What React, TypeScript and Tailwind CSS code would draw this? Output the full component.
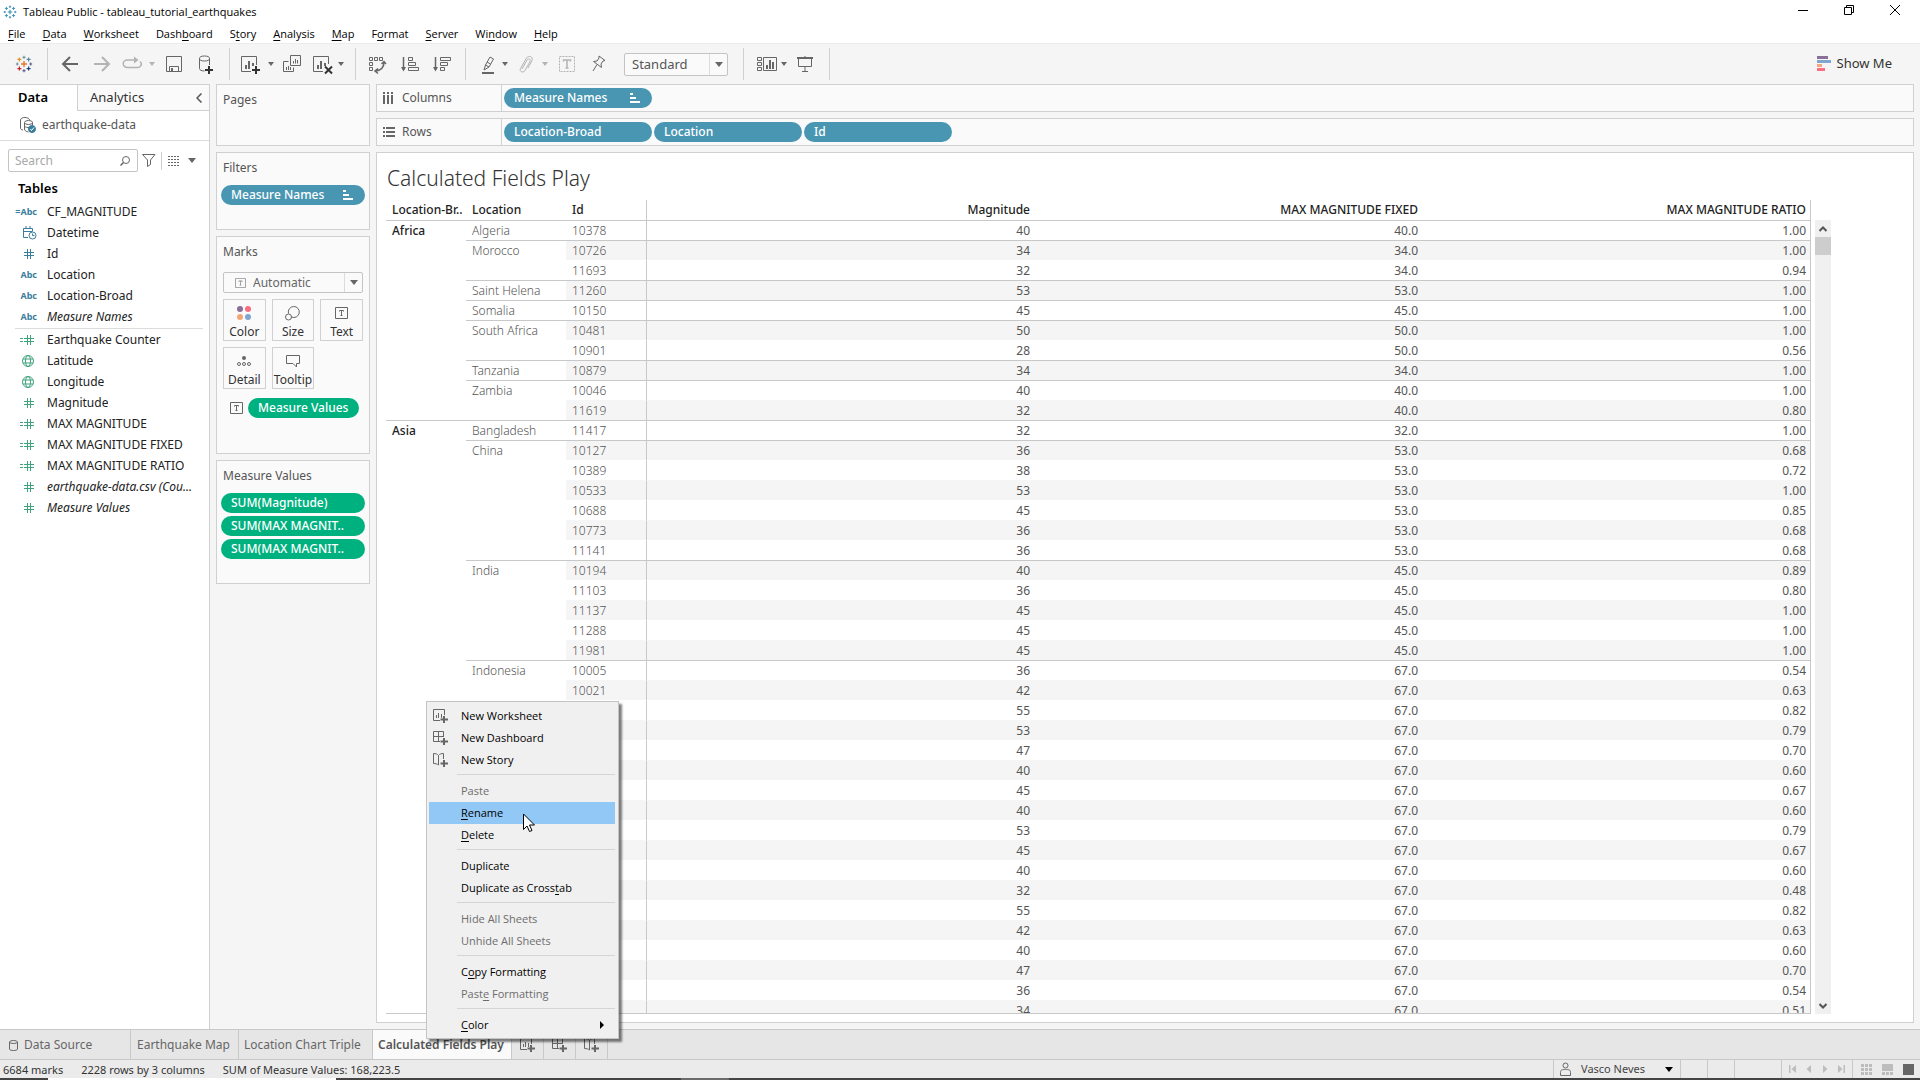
import { useState } from 'react';
import type { ReactNode } from 'react';
import clsx from 'clsx';

// "_" marks the mnemonic letter
const menus = [
  '_File', '_Data', '_Worksheet', 'Dash_board', 'S_tory', '_Analysis',
  '_Map', 'F_ormat', '_Server', 'Wi_ndow', '_Help',
];

type FieldIcon = 'calcAbc' | 'date' | 'num' | 'abc' | 'calcNum' | 'geo';
type Field = { name: string; icon: FieldIcon; italic?: boolean };

const dimensions: Field[] = [
  { name: 'CF_MAGNITUDE', icon: 'calcAbc' },
  { name: 'Datetime', icon: 'date' },
  { name: 'Id', icon: 'num' },
  { name: 'Location', icon: 'abc' },
  { name: 'Location-Broad', icon: 'abc' },
  { name: 'Measure Names', icon: 'abc', italic: true },
];

const measures: Field[] = [
  { name: 'Earthquake Counter', icon: 'calcNum' },
  { name: 'Latitude', icon: 'geo' },
  { name: 'Longitude', icon: 'geo' },
  { name: 'Magnitude', icon: 'num' },
  { name: 'MAX MAGNITUDE', icon: 'calcNum' },
  { name: 'MAX MAGNITUDE FIXED', icon: 'calcNum' },
  { name: 'MAX MAGNITUDE RATIO', icon: 'calcNum' },
  { name: 'earthquake-data.csv (Cou...', icon: 'num', italic: true },
  { name: 'Measure Values', icon: 'num', italic: true },
];

// region, location, id, magnitude, fixed, ratio
const rows: [string, string, string, string, string, string][] = [
  ['Africa', 'Algeria', '10378', '40', '40.0', '1.00'],
  ['', 'Morocco', '10726', '34', '34.0', '1.00'],
  ['', '', '11693', '32', '34.0', '0.94'],
  ['', 'Saint Helena', '11260', '53', '53.0', '1.00'],
  ['', 'Somalia', '10150', '45', '45.0', '1.00'],
  ['', 'South Africa', '10481', '50', '50.0', '1.00'],
  ['', '', '10901', '28', '50.0', '0.56'],
  ['', 'Tanzania', '10879', '34', '34.0', '1.00'],
  ['', 'Zambia', '10046', '40', '40.0', '1.00'],
  ['', '', '11619', '32', '40.0', '0.80'],
  ['Asia', 'Bangladesh', '11417', '32', '32.0', '1.00'],
  ['', 'China', '10127', '36', '53.0', '0.68'],
  ['', '', '10389', '38', '53.0', '0.72'],
  ['', '', '10533', '53', '53.0', '1.00'],
  ['', '', '10688', '45', '53.0', '0.85'],
  ['', '', '10773', '36', '53.0', '0.68'],
  ['', '', '11141', '36', '53.0', '0.68'],
  ['', 'India', '10194', '40', '45.0', '0.89'],
  ['', '', '11103', '36', '45.0', '0.80'],
  ['', '', '11137', '45', '45.0', '1.00'],
  ['', '', '11288', '45', '45.0', '1.00'],
  ['', '', '11981', '45', '45.0', '1.00'],
  ['', 'Indonesia', '10005', '36', '67.0', '0.54'],
  ['', '', '10021', '42', '67.0', '0.63'],
  ['', '', '', '55', '67.0', '0.82'],
  ['', '', '', '53', '67.0', '0.79'],
  ['', '', '', '47', '67.0', '0.70'],
  ['', '', '', '40', '67.0', '0.60'],
  ['', '', '', '45', '67.0', '0.67'],
  ['', '', '', '40', '67.0', '0.60'],
  ['', '', '', '53', '67.0', '0.79'],
  ['', '', '', '45', '67.0', '0.67'],
  ['', '', '', '40', '67.0', '0.60'],
  ['', '', '', '32', '67.0', '0.48'],
  ['', '', '', '55', '67.0', '0.82'],
  ['', '', '', '42', '67.0', '0.63'],
  ['', '', '', '40', '67.0', '0.60'],
  ['', '', '', '47', '67.0', '0.70'],
  ['', '', '', '36', '67.0', '0.54'],
  ['', '', '', '34', '67.0', '0.51'],
];

type MenuItem = { label: string; icon?: ReactNode; disabled?: boolean; submenu?: boolean };

const contextMenu: MenuItem[][] = [
  [
    { label: 'New Worksheet', icon: <NewSheetIcon /> },
    { label: 'New Dashboard', icon: <NewDashboardIcon /> },
    { label: 'New Story', icon: <NewStoryIcon /> },
  ],
  [
    { label: 'Paste', disabled: true },
    { label: '_Rename' },
    { label: '_Delete' },
  ],
  [{ label: 'Duplicate' }, { label: 'Duplicate as Cross_tab' }],
  [
    { label: 'Hide All Sheets', disabled: true },
    { label: 'Unhide All Sheets', disabled: true },
  ],
  [{ label: 'C_opy Formatting' }, { label: 'Past_e Formatting', disabled: true }],
  [{ label: '_Color', submenu: true }],
];

function Mnemonic({ text }: { text: string }) {
  const i = text.indexOf('_');
  if (i < 0) return <>{text}</>;
  return <>{text.slice(0, i)}<u className="underline-offset-2">{text[i + 1]}</u>{text.slice(i + 2)}</>;
}

/* ---------- Icons ---------- */

function TableauMark({ className, mono }: { className: string; mono?: boolean }) {
  const c = mono
    ? ['#3d8fb5', '#3d8fb5', '#3d8fb5', '#3d8fb5', '#3d8fb5', '#3d8fb5', '#3d8fb5', '#3d8fb5', '#3d8fb5']
    : ['#e8762d', '#7099a5', '#7099a5', '#5b6591', '#5b6591', '#eb912b', '#59879b', '#c72035', '#1f447e'];
  return (
    <svg viewBox="0 0 18 18" className={className} fill="none" strokeWidth="1.2" aria-hidden="true">
      <path stroke={c[0]} strokeWidth="1.4" d="M9 6v6M6 9h6" />
      <path stroke={c[1]} d="M9 .8v3M7.5 2.3h3" />
      <path stroke={c[3]} d="M9 14.2v3M7.5 15.7h3" />
      <path stroke={c[2]} d="M.8 9h3M2.3 7.5v3" />
      <path stroke={c[4]} d="M14.2 9h3M15.7 7.5v3" />
      <path stroke={c[5]} d="M4.4 2.4v4M2.4 4.4h4" />
      <path stroke={c[6]} d="M13.6 2.4v4M11.6 4.4h4" />
      <path stroke={c[7]} d="M4.4 11.6v4M2.4 13.6h4" />
      <path stroke={c[8]} d="M13.6 11.6v4M11.6 13.6h4" />
    </svg>
  );
}

function Caret({ className = 'text-[#666]' }: { className?: string }) {
  return <svg viewBox="0 0 6 4" className={clsx('w-1.5 h-1', className)} fill="currentColor" aria-hidden="true"><path d="M0 0h6L3 4z" /></svg>;
}

function BigCaret({ className = 'text-[#666]' }: { className?: string }) {
  return <svg viewBox="0 0 8 5" className={clsx('w-2 h-[5px]', className)} fill="currentColor" aria-hidden="true"><path d="M0 0h8L4 5z" /></svg>;
}

function Glyph({ children, className = 'size-6' }: { children: ReactNode; className?: string }) {
  return <svg viewBox="0 0 24 24" className={clsx('shrink-0', className)} fill="none" stroke="#666" aria-hidden="true">{children}</svg>;
}

function NewSheetIcon() {
  return (
    <svg viewBox="0 0 16 16" className="size-4 shrink-0" fill="none" stroke="#666" aria-hidden="true">
      <path d="M11.5 7V1.5h-11v11H7" />
      <path d="M3.5 7v3M5.5 5v5M8.5 6v4" />
      <path strokeWidth="2" d="M11 8v7M7.5 11.5h7.5" />
    </svg>
  );
}

function NewDashboardIcon() {
  return (
    <svg viewBox="0 0 16 16" className="size-4 shrink-0" fill="none" stroke="#666" aria-hidden="true">
      <path d="M10.5 7V1.5H.5v10H7M5.5 1.5v10M.5 6.5h10" />
      <path strokeWidth="2" d="M11 8v7M7.5 11.5h7.5" />
    </svg>
  );
}

function NewStoryIcon() {
  return (
    <svg viewBox="0 0 16 16" className="size-4 shrink-0" fill="none" stroke="#666" aria-hidden="true">
      <path d="M5.5 13V3.5C4.5 2 2.5 1.5.5 1.5v10c2 0 4 .5 5 1.5M5.500 3.5c1-1.5 3-2 5-2V7" />
      <path strokeWidth="2" d="M11 8v7M7.5 11.5h7.5" />
    </svg>
  );
}

function SortBars() {
  return (
    <svg viewBox="0 0 10 10" className="size-2.5" fill="white" aria-hidden="true">
      <path d="M0 0h3v2H0zM0 4h6v2H0zM0 8h10v2H0z" />
    </svg>
  );
}

function TextBox({ className = 'w-[13px] h-3' }: { className?: string }) {
  return (
    <svg viewBox="0 0 13 12" className={clsx('shrink-0', className)} fill="none" stroke="#666" aria-hidden="true">
      <path d="M.5.5h12v11H.5z" />
      <path d="M4.5 4.5v-1h4v1M6.5 3.5v5M5.5 8.5h2" />
    </svg>
  );
}

function FieldGlyph({ icon }: { icon: FieldIcon }) {
  if (icon === 'abc' || icon === 'calcAbc') {
    return (
      <span className="text-[9px] font-bold leading-none text-[#3a7d9c]">
        {icon === 'calcAbc' && '='}Abc
      </span>
    );
  }
  if (icon === 'date') {
    return (
      <svg viewBox="0 0 14 14" className="size-3.5" fill="none" stroke="#3a7d9c" aria-hidden="true">
        <path d="M5 11.5H.5v-9h9V5M.5 5.5h9M3 0v3M7 0v3" />
        <circle cx="9.5" cy="9.5" r="3.5" />
        <path d="M9.5 7.5v2h2" />
      </svg>
    );
  }
  if (icon === 'geo') {
    return (
      <svg viewBox="0 0 12 12" className="mr-[3px] size-3" fill="none" stroke="#3fa37e" aria-hidden="true">
        <circle cx="6" cy="6" r="5.5" />
        <ellipse cx="6" cy="6" rx="2.5" ry="5.5" />
        <path d="M1 4h10M1 8h10" />
      </svg>
    );
  }
  return (
    <svg viewBox="0 0 14 10" className="mr-[3px] h-2.5 w-3.5" fill="none" stroke="currentColor" aria-hidden="true">
      {icon === 'calcNum' && <path d="M0 3.5h3M0 6.5h3" />}
      <path d="M7.5 0v10M10.5 0v10M4 3.5h10M4 6.5h10" />
    </svg>
  );
}

/* ---------- Pieces ---------- */

function Divider({ className }: { className?: string }) {
  return <div className={clsx('w-px shrink-0 self-stretch my-1 bg-[#d0d0d0]', className)} />;
}

function Tool({ label, className = 'w-8', children }: { label: string; className?: string; children: ReactNode }) {
  return (
    <button type="button" aria-label={label} className={clsx('flex h-8 shrink-0 items-center justify-center', className)}>
      {children}
    </button>
  );
}

function Toolbar() {
  return (
    <div className="flex h-[41px] shrink-0 items-center border-t border-[#ececec] bg-[#f5f5f5]">
      <Tool label="Start page" className="w-[47px]"><TableauMark className="size-[18px]" /></Tool>
      <Divider className="mr-1.5" />
      <Tool label="Undo">
        <Glyph><path strokeWidth="2" d="M20 12H5M12 5l-7 7 7 7" /></Glyph>
      </Tool>
      <Tool label="Redo">
        <Glyph><path stroke="#b3b3b3" strokeWidth="2" d="M4 12h15M12 5l7 7-7 7" /></Glyph>
      </Tool>
      <Tool label="Replay" className="w-7">
        <Glyph>
          <path stroke="#b3b3b3" strokeWidth="1.5" d="M16 8H7.500a4 3.500 0 0 0 0 7.500h9A4 3.500 0 0 0 20 9.500" />
          <path fill="#b3b3b3" stroke="none" d="M14 4.500 18.500 8 14 11.500z" />
        </Glyph>
      </Tool>
      <Tool label="Replay options" className="w-3"><Caret className="text-[#b3b3b3]" /></Tool>
      <Tool label="Save">
        <Glyph><path d="M4.5 4.5h15v15h-15zM7.5 19.500v-5h9v5" /><path strokeWidth="2" d="M10 16v3.5" /></Glyph>
      </Tool>
      <Tool label="New data source">
        <Glyph>
          <ellipse cx="10.5" cy="6.5" rx="5" ry="2.5" />
          <path d="M5.5 6.5v10c0 1.500 2 2.500 5 2.500M15.5 6.500V13" />
          <path stroke="#333" strokeWidth="2" d="M15 14v8M11 18h8" />
        </Glyph>
      </Tool>
      <Divider className="ml-[7px] mr-1" />
      <Tool label="New worksheet">
        <Glyph>
          <path d="M18.5 13V4.500h-15v15H13" />
          <path strokeWidth="2" d="M8 13v4M11 9v8M15 11v3" />
          <path stroke="#333" strokeWidth="2" d="M18 14v8M14 18h8" />
        </Glyph>
      </Tool>
      <Tool label="New worksheet options" className="w-2.5"><Caret /></Tool>
      <Tool label="Duplicate sheet">
        <Glyph>
          <path d="M10.5 3.500h10v10h-10zM8.500 9.500h-5v10h10v-4" />
          <path d="M13.5 9v2.500M15.500 7v4.500M17.500 8v3.500M6.500 15v3M8.500 14v4M10.500 15v3" />
        </Glyph>
      </Tool>
      <Tool label="Clear sheet" className="w-7">
        <Glyph>
          <path d="M18.5 12V4.500h-15v15H13" />
          <path strokeWidth="2" d="M8 13v4M11 9v8M15 11v3" />
          <path stroke="#333" strokeWidth="2" d="m15 14.500 7 7M22 14.500l-7 7" />
        </Glyph>
      </Tool>
      <Tool label="Clear sheet options" className="w-2.5"><Caret /></Tool>
      <Divider className="ml-[9px] mr-[5px]" />
      <Tool label="Swap rows and columns">
        <Glyph>
          <path d="M4.5 5.500h3v3h-3zM9.500 5.500h3v3h-3zM14.500 5.500h3v3h-3zM4.500 10.500h3v3h-3zM4.500 15.500h3v3h-3z" />
          <path strokeWidth="1.5" d="M19 10c0 5-2 8-8 9M16.500 12 19 9.500l2 2.500M13 16.500l-3 2.500 3 2.500" />
        </Glyph>
      </Tool>
      <Tool label="Sort ascending">
        <Glyph>
          <path strokeWidth="1.5" d="M6.500 5v13" />
          <path fill="#666" stroke="none" d="M4 15h5l-2.500 4.500z" />
          <path d="M11.5 5.500h4v3h-4zM11.500 10.500h7v3h-7zM11.500 15.500h10v3h-10z" />
        </Glyph>
      </Tool>
      <Tool label="Sort descending">
        <Glyph>
          <path strokeWidth="1.5" d="M6.500 5v13" />
          <path fill="#666" stroke="none" d="M4 15h5l-2.500 4.500z" />
          <path d="M11.5 5.500h10v3h-10zM11.500 10.500h7v3h-7zM11.500 15.500h4v3h-4z" />
        </Glyph>
      </Tool>
      <Divider className="ml-2 mr-2.5" />
      <Tool label="Highlight" className="w-6">
        <Glyph>
          <path d="m9.500 13 4.500-8 3.500 2-4.500 8zM9.500 13l-1.500 5 5-3M11 10l3.500 2" />
          <path strokeWidth="2" d="M6 21h12" />
        </Glyph>
      </Tool>
      <Tool label="Highlight options" className="w-2.5"><Caret /></Tool>
      <Tool label="Group members" className="w-[30px]">
        <Glyph>
          <path stroke="#b3b3b3" d="m9 17 5-9c1.500-2 4-1 3 1.500l-5 9c-2 3-6 1-4.500-2l6-10.500c2-3 7-1.500 5.500 2.500l-4 7.500" />
        </Glyph>
      </Tool>
      <Tool label="Group options" className="w-2.5"><Caret className="text-[#b3b3b3]" /></Tool>
      <Tool label="Show mark labels" className="w-[34px]">
        <Glyph>
          <path stroke="#b3b3b3" strokeDasharray="2 1" d="M4.500 4.500h15v15h-15z" />
          <path stroke="#b3b3b3" strokeWidth="1.5" d="M8.500 9.500v-1.500h7v1.500M12 8v8M10.500 16h3" />
        </Glyph>
      </Tool>
      <Tool label="Fix axes" className="w-7">
        <Glyph><path d="m13 4 6 4.500-2 .500-2 3 .500 3.500-8-6 3.500-.500 2-3zM11 12.500l-4 6.500" /></Glyph>
      </Tool>
      <div className="relative ml-3 h-[23px] w-[104px] shrink-0">
        <select aria-label="Fit" className="h-full w-full appearance-none rounded-xs border border-[#c4c4c4] bg-[#fafafa] pl-[7px] text-[13px] leading-5 text-[#555]">
          <option>Standard</option>
          <option>Fit Width</option>
          <option>Fit Height</option>
          <option>Entire View</option>
        </select>
        <span className="pointer-events-none absolute inset-y-px right-px flex w-[18px] items-center justify-center border-l border-[#dcdcdc]"><BigCaret /></span>
      </div>
      <Divider className="ml-[15px] mr-[9px]" />
      <Tool label="Show or hide cards" className="w-[26px]">
        <Glyph>
          <path d="M3.500 5.500h4v3h-4zM3.500 10.500h4v3h-4zM3.500 15.500h4v3h-4zM9.500 5.500h13v13h-13z" />
          <path strokeWidth="2" d="M13 13v4M16 8v9M19 10v7" />
        </Glyph>
      </Tool>
      <Tool label="Card options" className="w-2.5"><Caret /></Tool>
      <Tool label="Presentation mode">
        <Glyph>
          <path strokeWidth="2" d="M4 6h16" />
          <path d="M5.500 6v8.500h13V6M12 4v2M12 14.500v5M9 19.500h6" />
        </Glyph>
      </Tool>
      <Divider className="ml-2" />
      <button type="button" className="ml-auto mr-7 flex items-center gap-1.5 text-[13px] text-[#333]">
        <svg viewBox="0 0 14 15" className="h-[15px] w-3.5" aria-hidden="true">
          <path fill="#8a6f98" d="M0 0h11v3H0z" />
          <path fill="#7fa6cf" d="M0 4h14v3H0z" />
          <path fill="#f4a582" d="M0 8h5v3H0z" />
          <path fill="#fa6e80" d="M0 12h8v3H0z" />
        </svg>
        Show Me
      </button>
    </div>
  );
}

function FieldRow({ field, tone }: { field: Field; tone: string }) {
  return (
    <li className="flex h-[21px] items-center gap-2.5">
      <span className={clsx('flex w-[37px] justify-end', tone)}><FieldGlyph icon={field.icon} /></span>
      <span className={clsx('truncate text-[#222]', field.italic && 'italic')}>{field.name}</span>
    </li>
  );
}

function DataPane() {
  const [query, setQuery] = useState('');
  return (
    <aside className="flex w-[210px] shrink-0 flex-col border-r border-[#d0d0d0] bg-white">
      <div className="flex h-[27px] shrink-0 border-t border-[#d0d0d0]" role="tablist">
        <button type="button" role="tab" aria-selected="true" className="w-[77px] pl-[18px] text-left text-[13px] font-semibold text-black">Data</button>
        <div className="flex flex-1 items-center border-b border-l border-[#d0d0d0] bg-[#fafafa]">
          <button type="button" role="tab" aria-selected="false" className="pl-3 text-[13px] text-[#333]">Analytics</button>
          <button type="button" aria-label="Collapse pane" className="ml-auto mr-[7px]">
            <svg viewBox="0 0 6 10" className="h-2.5 w-1.5" fill="none" stroke="#555" strokeWidth="1.5"><path d="M5.500.500 1 5l4.500 4.500" /></svg>
          </button>
        </div>
      </div>
      <div className="flex h-[30px] shrink-0 items-center gap-1.5 border-b border-[#dcdcdc] pb-0.5 pl-5 text-[#555]">
        <svg viewBox="0 0 16 16" className="size-4" fill="none" stroke="#666" aria-hidden="true">
          <path d="M9.500 3C9.500 1.500 7.500.500 5 .500S.500 1.500.500 3v8c0 1 1 2 2.500 2M4.500 6v6c0 1.500 1.500 2.500 4 3" />
          <ellipse cx="8.500" cy="5.500" rx="4" ry="2" />
          <path d="M12.500 5.500V8M4.500 9c1 1.500 3 1.500 5 1.500" />
          <circle cx="12" cy="12" r="3.500" fill="#3a7d9c" stroke="#3a7d9c" />
          <path stroke="white" d="m10.500 12 1 1.500 2.500-3" />
        </svg>
        earthquake-data
      </div>
      <div className="mt-2 flex h-[23px] shrink-0 items-center pl-2">
        <label className="flex h-full w-[130px] items-center rounded-xs border border-[#c4c4c4] pl-1.5 pr-[7px]">
          <input value={query} onChange={e => setQuery(e.target.value)} placeholder="Search" aria-label="Search fields" className="w-full min-w-0 text-[#333] outline-none placeholder:text-[#a8a8a8]" />
          <svg viewBox="0 0 10 10" className="size-2.5 shrink-0" fill="none" stroke="#666"><circle cx="6" cy="4" r="3.500" /><path strokeWidth="1.5" d="M3.500 6.500.500 9.500" /></svg>
        </label>
        <button type="button" aria-label="Filter fields" className="ml-1">
          <svg viewBox="0 0 14 13" className="h-[13px] w-3.5" fill="none" stroke="#666"><path d="M.500.500h12.500L8.500 6v4.500l-3 2V6z" /></svg>
        </button>
        <span className="ml-[5px] h-[18px] w-px bg-[#d0d0d0]" />
        <button type="button" aria-label="View as list" className="ml-1.5">
          <svg viewBox="0 0 12 10" className="h-2.5 w-3" stroke="#666"><path strokeDasharray="2 1" d="M0 .5h12M0 3.5h12M0 6.5h12M0 9.5h12" /></svg>
        </button>
        <button type="button" aria-label="Data pane options" className="ml-2 flex h-5 w-2 items-center"><BigCaret /></button>
      </div>
      <h2 className="mt-1.5 pl-[18px] text-[13px] font-semibold leading-5 text-black">Tables</h2>
      <ul className="mt-[3px]">
        {dimensions.map(f => <FieldRow key={f.name} field={f} tone="text-[#3a7d9c]" />)}
      </ul>
      <hr className="ml-[15px] mr-1.5 mt-px border-[#dcdcdc]" />
      <ul>
        {measures.map(f => <FieldRow key={f.name} field={f} tone="text-[#3fa37e]" />)}
      </ul>
    </aside>
  );
}

function Pill({ children, green, sorted, className = 'w-full' }: { children: ReactNode; green?: boolean; sorted?: boolean; className?: string }) {
  return (
    <button
      type="button"
      className={clsx(
        'flex h-5 items-center justify-between whitespace-nowrap rounded-full pl-2.5 font-medium text-white',
        green ? 'bg-[#00b180]' : 'bg-[#4996b2]',
        sorted ? 'pr-3' : 'pr-1',
        className,
      )}
    >
      {children}
      {sorted && <SortBars />}
    </button>
  );
}

function Card({ title, className, children }: { title: string; className: string; children?: ReactNode }) {
  return (
    <section className={clsx('border border-[#d0d0d0] bg-[#fafafa]', className)}>
      <h2 className="pl-1.5 pt-[7px] leading-4 text-[#555]">{title}</h2>
      {children}
    </section>
  );
}

function MarkButton({ label, children }: { label: string; children: ReactNode }) {
  return (
    <button type="button" className="flex h-[42px] w-full flex-col items-center border border-[#d0d0d0] text-[#333]">
      <span className="flex h-[26px] items-center">{children}</span>
      <span className="leading-3">{label}</span>
    </button>
  );
}

function Cards() {
  return (
    <div className="flex w-[154px] shrink-0 flex-col gap-1.5">
      <Card title="Pages" className="h-[62px]" />
      <Card title="Filters" className="h-[78px]">
        <div className="px-1 pt-[9px]"><Pill sorted>Measure Names</Pill></div>
      </Card>
      <Card title="Marks" className="h-[218px]">
        <div className="px-1.5 pt-3">
          <div className="relative h-[21px]">
            <span className="pointer-events-none absolute inset-y-0 left-3 flex items-center"><TextBox className="h-2.5 w-[11px] opacity-70" /></span>
            <select aria-label="Mark type" className="h-full w-full appearance-none rounded-xs border border-[#c4c4c4] bg-transparent pl-[29px] pt-px leading-4 text-[#666]">
              <option>Automatic</option>
              <option>Bar</option>
              <option>Line</option>
              <option>Text</option>
            </select>
            <span className="pointer-events-none absolute inset-y-px right-px flex w-[18px] items-center justify-center border-l border-[#dcdcdc]"><BigCaret /></span>
          </div>
          <div className="mt-1.5 grid grid-cols-3 gap-1.5">
            <MarkButton label="Color">
              <svg viewBox="0 0 14 14" className="size-3.5">
                <circle cx="3" cy="3" r="3" fill="#8a6f98" /><circle cx="11" cy="3" r="3" fill="#fa6e80" />
                <circle cx="3" cy="11" r="3" fill="#f4a578" /><circle cx="11" cy="11" r="3" fill="#7fa6cf" />
              </svg>
            </MarkButton>
            <MarkButton label="Size">
              <svg viewBox="0 0 15 15" className="size-[15px]" fill="none" stroke="#666">
                <path d="M3.500 7.500A5.500 5.500 0 1 1 6.500 11" /><circle cx="3.500" cy="11" r="3" />
              </svg>
            </MarkButton>
            <MarkButton label="Text"><TextBox /></MarkButton>
            <MarkButton label="Detail">
              <svg viewBox="0 0 14 10" className="h-2.5 w-3.5" fill="none" stroke="#666">
                <circle cx="7" cy="2" r="2" fill="#666" stroke="none" />
                <circle cx="2" cy="8" r="1.5" /><circle cx="7" cy="8" r="1.5" /><circle cx="12" cy="8" r="1.5" />
              </svg>
            </MarkButton>
            <MarkButton label="Tooltip">
              <svg viewBox="0 0 14 13" className="h-[13px] w-3.5" fill="none" stroke="#666"><path d="M.500.500h13v8h-3V12L7 8.500H.500z" /></svg>
            </MarkButton>
          </div>
          <div className="mt-[9px] flex items-center gap-[5px] pl-[7px]">
            <TextBox />
            <Pill green className="w-[111px]">Measure Values</Pill>
          </div>
        </div>
      </Card>
      <Card title="Measure Values" className="h-[124px]">
        <div className="flex flex-col gap-[3px] px-1 pt-[9px]">
          <Pill green>SUM(Magnitude)</Pill>
          <Pill green>SUM(MAX MAGNIT..</Pill>
          <Pill green>SUM(MAX MAGNIT..</Pill>
        </div>
      </Card>
    </div>
  );
}

function Shelf({ label, icon, children }: { label: string; icon: ReactNode; children: ReactNode }) {
  return (
    <div className="flex h-7 shrink-0 border border-[#d0d0d0] bg-[#fafafa]">
      <div className="flex w-[125px] items-center border-r border-[#d0d0d0] pl-1.5 text-[#555]">
        <span className="w-[19px]">{icon}</span>
        {label}
      </div>
      <div className="flex items-center gap-0.5 pl-0.5">{children}</div>
    </div>
  );
}

function Crosstab() {
  return (
    <section className="flex min-h-0 flex-1 flex-col border border-[#d0d0d0] bg-white pb-2 pl-[9px] pr-[82px]">
      <h1 className="h-[47px] pl-px pt-[11px] text-[21px] font-light leading-7 text-[#333]">Calculated Fields Play</h1>
      <div className="flex min-h-0 flex-1 gap-1">
        <div className="min-w-0 flex-1 overflow-hidden border-b border-r border-[#c8c8c8]">
          <table className="w-full table-fixed border-separate border-spacing-0 text-left">
            <colgroup>
              <col className="w-20" />
              <col className="w-[100px]" />
              <col className="w-20" />
              <col /><col /><col />
            </colgroup>
            <thead>
              <tr className="h-5 text-[#222] [&>th]:p-0 [&>th]:px-1.5 [&>th]:font-medium [&>th]:leading-5">
                <th className="whitespace-nowrap">Location-Br..</th>
                <th>Location</th>
                <th>Id</th>
                <th className="border-l border-[#c8c8c8] text-right !pr-1">Magnitude</th>
                <th className="text-right !pr-1">MAX MAGNITUDE FIXED</th>
                <th className="text-right !pr-1">MAX MAGNITUDE RATIO</th>
              </tr>
            </thead>
            <tbody>
              {rows.map(([region, location, id, ...values], i) => {
                const line = location ? 'border-t border-t-[#c8c8c8]' : 'border-t border-t-transparent';
                const band = i % 2 ? 'bg-[#f5f5f5]' : '';
                return (
                  <tr key={i} className="h-5 leading-[19px]">
                    <th className={clsx('p-0 pl-1.5 font-medium text-[#222] border-t', region ? 'border-t-[#c8c8c8]' : 'border-t-transparent')}>{region}</th>
                    <td className={clsx('p-0 pl-1.5 font-light text-[#555]', line)}>{location}</td>
                    <td className={clsx('p-0 pl-1.5 font-light text-[#555]', line, band)}>{id}</td>
                    {values.map((v, c) => (
                      <td key={c} className={clsx('p-0 pr-1 text-right text-[#555]', line, band, c === 0 && 'border-l border-l-[#c8c8c8]')}>{v}</td>
                    ))}
                  </tr>
                );
              })}
            </tbody>
          </table>
        </div>
        {/* Scrollbar */}
        <div className="mt-5 flex w-4 flex-col items-center bg-[#f0f0f0]">
          <button type="button" aria-label="Scroll up" className="flex h-[17px] items-center">
            <svg viewBox="0 0 8 6" className="h-1.5 w-2" fill="none" stroke="#555" strokeWidth="2"><path d="M.500 5 4 1.500 7.500 5" /></svg>
          </button>
          <div className="h-[18px] w-full bg-[#cdcdcd]" />
          <button type="button" aria-label="Scroll down" className="mt-auto flex h-[17px] items-center">
            <svg viewBox="0 0 8 6" className="h-1.5 w-2" fill="none" stroke="#555" strokeWidth="2"><path d="M.500 1 4 4.500 7.500 1" /></svg>
          </button>
        </div>
      </div>
    </section>
  );
}

function SheetTabs() {
  const tab = 'border-r border-[#c8c8c8] whitespace-nowrap text-left pt-px';
  return (
    <nav className="flex h-[30px] shrink-0 border-t border-[#c8c8c8] bg-[#e6e6e6] text-[#666]">
      <button type="button" className={clsx(tab, 'flex w-[131px] items-center gap-1.5 pl-[9px]')}>
        <svg viewBox="0 0 9 11" className="h-[11px] w-[9px]" fill="none" stroke="#666" aria-hidden="true">
          <ellipse cx="4.500" cy="2" rx="4" ry="1.500" /><path d="M.500 2v7c0 2 8 2 8 0V2" />
        </svg>
        Data Source
      </button>
      <button type="button" className={clsx(tab, 'w-[108px] pl-1.5')}>Earthquake Map</button>
      <button type="button" className={clsx(tab, 'w-[134px] pl-[5px]')}>Location Chart Triple</button>
      <button type="button" aria-current="page" className={clsx(tab, 'w-[139px] bg-[#fafafa] pl-[5px] font-semibold text-[#555]')}>Calculated Fields Play</button>
      <button type="button" aria-label="New worksheet" className="flex w-8 items-center justify-center border-r border-[#c8c8c8]"><NewSheetIcon /></button>
      <button type="button" aria-label="New dashboard" className="flex w-8 items-center justify-center border-r border-[#c8c8c8]"><NewDashboardIcon /></button>
      <button type="button" aria-label="New story" className="flex w-8 items-center justify-center border-r border-[#c8c8c8]"><NewStoryIcon /></button>
    </nav>
  );
}

function NavArrow({ label, d }: { label: string; d: string }) {
  return (
    <button type="button" aria-label={label} className="flex w-4 items-center justify-center">
      <svg viewBox="0 0 8 8" className="size-2" fill="#bdbdbd"><path d={d} /></svg>
    </button>
  );
}

function StatusBar() {
  return (
    <footer className="flex h-[19px] shrink-0 border-t border-[#c8c8c8] bg-[#ebebeb] pl-[3px] text-[11px] leading-5 text-[#333]">
      <span>6684 marks</span>
      <span className="ml-[18px]">2228 rows by 3 columns</span>
      <span className="ml-[18px]">SUM of Measure Values: 168,223.5</span>
      <div className="ml-auto flex items-stretch">
        <button type="button" className="flex w-[127px] items-center border-l border-[#c8c8c8] pl-1.5">
          <svg viewBox="0 0 11 14" className="mr-2.5 h-3.5 w-[11px]" fill="none" stroke="#666" aria-hidden="true">
            <circle cx="5.500" cy="3.500" r="2.500" /><path d="M.500 13.500v-3c0-3 2-3 5-3s5 0 5 3v3z" />
          </svg>
          <span className="text-[#444]">Vasco Neves</span>
          <span className="ml-auto mr-[7px]"><BigCaret className="text-black" /></span>
        </button>
        <span className="w-[27px] border-l border-[#c8c8c8]" />
        <span className="w-[27px] border-l border-[#c8c8c8]" />
        <span className="w-[47px] border-l border-[#c8c8c8]" />
        <div className="flex w-[71px] items-stretch border-l border-[#c8c8c8] pl-[3px]">
          <NavArrow label="First sheet" d="M0 0h1.500v8H0zM7 0v8L2.500 4z" />
          <NavArrow label="Previous sheet" d="M6 0v8L1.500 4z" />
          <NavArrow label="Next sheet" d="M2 0v8l4.500-4z" />
          <NavArrow label="Last sheet" d="M1 0v8l4.500-4zM6.500 0H8v8H6.500z" />
        </div>
        <div className="flex items-center gap-2.5 border-l border-[#c8c8c8] pl-2 pr-1.5">
          <button type="button" aria-label="Sheet sorter">
            <svg viewBox="0 0 11 11" className="size-[11px]" fill="#bdbdbd"><path d="M0 0h3v3H0zM4 0h3v3H4zM8 0h3v3H8zM0 4h3v3H0zM4 4h3v3H4zM8 4h3v3H8zM0 8h3v3H0zM4 8h3v3H4zM8 8h3v3H8z" /></svg>
          </button>
          <button type="button" aria-label="Filmstrip">
            <svg viewBox="0 0 11 11" className="size-[11px]" fill="#bdbdbd"><path d="M0 0h11v7H0zM0 8h3v3H0zM4 8h3v3H4zM8 8h3v3H8z" /></svg>
          </button>
          <button type="button" aria-label="Tabs" className="size-[11px] bg-[#666]" />
        </div>
      </div>
    </footer>
  );
}

function ContextMenu() {
  return (
    <div role="menu" className="absolute bottom-[41px] left-[426px] w-[193px] border border-[#c4c4c4] bg-[#f0f0f0] pb-0.5 pl-0.5 pr-[3px] pt-[3px] font-['Open_Sans',sans-serif] text-[11px] shadow-[3px_3px_2px_rgba(0,0,0,0.5)]">
      {contextMenu.map((group, g) => (
        <div key={g}>
          {g > 0 && <hr className="mb-[5px] ml-7 mt-[3px] border-[#d5d5d5]" />}
          {group.map(item => (
            <button
              key={item.label}
              type="button"
              role="menuitem"
              disabled={item.disabled}
              className={clsx(
                'flex h-[22px] w-full items-center text-left',
                item.disabled ? 'text-[#6d6d6d]' : 'text-black',
                item.label === '_Rename' && 'bg-[#91c8f6]',
              )}
            >
              <span className="w-8 pl-1">{item.icon}</span>
              <span className="flex-1"><Mnemonic text={item.label} /></span>
              {item.submenu && <svg viewBox="0 0 4 8" className="mr-[11px] h-2 w-1"><path d="M0 0v8l4-4z" /></svg>}
            </button>
          ))}
        </div>
      ))}
    </div>
  );
}

export default function App() {
  return (
    <div className="relative flex h-screen flex-col overflow-hidden bg-[#f5f5f5] font-['Noto_Sans',sans-serif] text-xs">
      {/* Title bar */}
      <header className="shrink-0 bg-white font-['Open_Sans',sans-serif] text-[11px] text-black">
        <div className="flex h-6 items-center pl-[3px]">
          <TableauMark mono className="size-3.5" />
          <span className="ml-1.5">Tableau Public - tableau_tutorial_earthquakes</span>
          <div className="ml-auto mr-5 flex items-center gap-9 pb-1">
            <button type="button" aria-label="Minimize" className="flex size-2.5 items-center"><span className="h-px w-full bg-black" /></button>
            <button type="button" aria-label="Restore">
              <svg viewBox="0 0 10 10" className="size-2.5" fill="none" stroke="black"><path d="M.500 2.500h7v7h-7zM2.500 2.500v-2h7v7h-2" /></svg>
            </button>
            <button type="button" aria-label="Close">
              <svg viewBox="0 0 10 10" className="size-2.5" fill="none" stroke="black"><path d="m0 0 10 10M10 0 0 10" /></svg>
            </button>
          </div>
        </div>
        <nav className="flex h-[19px] items-center gap-px pt-px">
          {menus.map(m => <button key={m} type="button" className="px-2"><Mnemonic text={m} /></button>)}
        </nav>
      </header>

      <Toolbar />

      <div className="flex min-h-0 flex-1 gap-1.5 pr-1.5">
        <DataPane />
        <Cards />
        <main className="flex min-w-0 flex-1 flex-col gap-1.5 pb-1.5">
          <Shelf label="Columns" icon={<svg viewBox="0 0 11 12" className="h-3 w-[11px]" fill="#666"><path d="M0 0h2v2H0zM4 0h2v2H4zM8 0h2v2H8zM0 3h2v9H0zM4 3h2v9H4zM8 3h2v9H8z" /></svg>}>
            <Pill sorted className="w-[148px]">Measure Names</Pill>
          </Shelf>
          <Shelf label="Rows" icon={<svg viewBox="0 0 12 10" className="h-2.5 w-3" fill="#666"><path d="M0 0h2v2H0zM0 4h2v2H0zM0 8h2v2H0zM3 0h9v2H3zM3 4h9v2H3zM3 8h9v2H3z" /></svg>}>
            <Pill className="w-[148px]">Location-Broad</Pill>
            <Pill className="w-[148px]">Location</Pill>
            <Pill className="w-[148px]">Id</Pill>
          </Shelf>
          <Crosstab />
        </main>
      </div>

      <SheetTabs />
      <StatusBar />

      {/* Edge of the desktop task bar */}
      <div className="flex h-0.5 shrink-0 bg-[#444]">
        <div className="ml-12 w-72 bg-white" />
        <div className="ml-[345px] w-12 bg-[#6b6b6b]" />
      </div>

      <ContextMenu />

      {/* Mouse pointer */}
      <svg viewBox="0 0 12 19" className="pointer-events-none absolute left-[523px] top-[813px] h-[19px] w-3" fill="white" stroke="black" aria-hidden="true">
        <path d="M.5 1v15.500L4 13l2.500 5.500 2.500-1-2.500-5.500h5z" />
      </svg>
    </div>
  );
}
